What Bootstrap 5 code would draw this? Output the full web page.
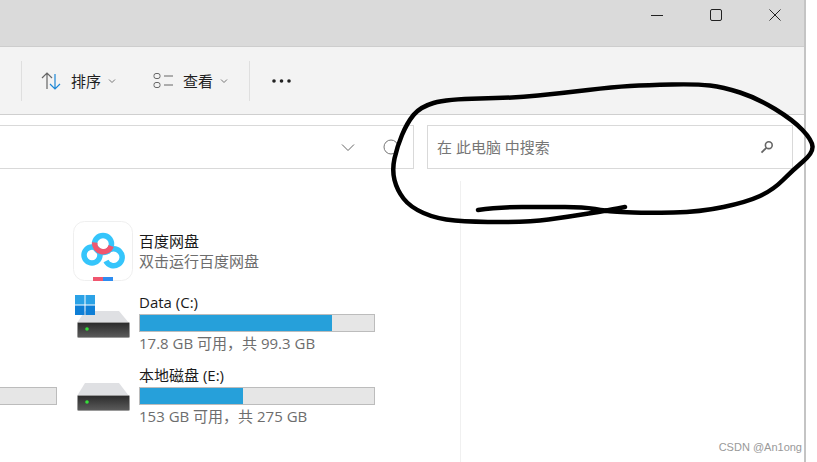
<!DOCTYPE html>
<html lang="zh-CN">
<head>
    <meta charset="UTF-8">
    <meta name="viewport" content="width=device-width, initial-scale=1.0">
    <title>此电脑</title>
    <link href="https://cdn.jsdelivr.net/npm/bootstrap@5.3.0/dist/css/bootstrap.min.css" rel="stylesheet">
    <style>
        html, body { height: 100%; overflow: hidden; background: #fff; }
        body { font-family: "Open Sans", "Noto Sans CJK SC", sans-serif; font-size: 15px; color: #1a1a1a; position: relative; }
        .win { width: 806px; height: 462px; border-right: 2px solid #c4c4c4; overflow: hidden; }
        .title-bar { height: 47px; background: #dadada; border-bottom: 1px solid #cdcdcd; }
        .win-btn { width: 59px; height: 30px; }
        .tool-bar { height: 68px; background: #f3f3f3; border-bottom: 1px solid #cfcfcf; padding-left: 21px; }
        .tool-sep { width: 1px; height: 40px; background: #dfdfdf; }
        .tool-btn { line-height: 20px; color: #1f1f1f; gap: 9px; }
        .tool-btn .chev { margin-left: -2px; }
        .sort-btn { margin-left: 19px; }
        .view-btn { margin-left: 37px; }
        .sep-after { margin-left: 21px; }
        .more-btn { margin-left: 21px; }
        .addr-row { padding-top: 10px; gap: 13px; }
        .addr-box { width: 415px; height: 44px; margin-left: -1px; border: 1px solid #d9d9d9; padding-right: 14px; gap: 28px; }
        .search-box { width: 366px; height: 44px; border: 1px solid #d9d9d9; padding: 0 18px 0 9px; color: #767676; }
        .main-pane { width: 461px; height: 282px; margin-top: 12px; border-right: 1px solid #f0f0f0; padding-top: 40px; }
        .gutter { width: 57px; margin-right: 16px; }
        .item-icon { width: 60px; margin-right: 6px; }
        .drive-bar { height: 18px; margin: 2px 0 1px; background: #e6e6e6; border: 1px solid #bcbcbc; }
        .gutter-bar { margin-top: 22px; border-left: 0; }
        .drive-fill { height: 100%; background: #26a0da; }
        .drive-info { width: 236px; line-height: 20px; }
        .app-info { padding-top: 10px; }
        .drive-sub { color: #6d6d6d; }
        .drive-row-c { margin-top: 11px; }
        .drive-row-e { margin-top: 12px; }
        .ink { position: absolute; left: 0; top: 0; pointer-events: none; }
        .mark-csdn { position: absolute; right: 15px; top: 439px; font-family: "Liberation Sans", sans-serif; font-size: 11px; color: #999; line-height: 16px; }
    </style>
</head>
<body>
    <svg width="0" height="0" class="position-absolute">
        <defs>
            <linearGradient id="hddBody" x1="0" y1="0" x2="0" y2="1">
                <stop offset="0" stop-color="#2b2b2b"/>
                <stop offset="1" stop-color="#5c5c5c"/>
            </linearGradient>
        </defs>
    </svg>

    <div class="win">
        <div class="title-bar d-flex justify-content-end">
            <div class="win-btn d-flex align-items-center justify-content-center">
                <svg width="14" height="14" viewBox="0 0 14 14"><path d="M1 7.500h12" stroke="#222" fill="none"/></svg>
            </div>
            <div class="win-btn d-flex align-items-center justify-content-center">
                <svg width="14" height="14" viewBox="0 0 14 14"><rect x="1.500" y="1.500" width="11" height="11" rx="1.500" stroke="#222" fill="none"/></svg>
            </div>
            <div class="win-btn d-flex align-items-center justify-content-center">
                <svg width="14" height="14" viewBox="0 0 14 14"><path d="M1.500 1.500l11 11M12.500 1.500l-11 11" stroke="#222" fill="none"/></svg>
            </div>
        </div>

        <div class="tool-bar d-flex align-items-center">
            <div class="tool-sep"></div>
            <div class="tool-btn sort-btn d-flex align-items-center">
                <svg width="21" height="20" viewBox="0 0 21 20"><path d="M6 18V2M1 7l5-5 5 5" stroke="#666" stroke-width="1.200" fill="none"/><path d="M14 3v15M9 13l5 5 5-5" stroke="#1b87d6" stroke-width="1.200" fill="none"/></svg>
                <span>排序</span>
                <svg class="chev" width="8" height="6" viewBox="0 0 8 6"><path d="M1 1.500l3 3 3-3" stroke="#777" fill="none"/></svg>
            </div>
            <div class="tool-btn view-btn d-flex align-items-center">
                <svg width="21" height="18" viewBox="0 0 21 18"><rect x="1" y="1.500" width="6" height="5" rx="2" stroke="#666" fill="none"/><rect x="1" y="10.500" width="6" height="5" rx="2" stroke="#666" fill="none"/><path d="M11 4h9M11 13h9" stroke="#666" fill="none"/></svg>
                <span>查看</span>
                <svg class="chev" width="8" height="6" viewBox="0 0 8 6"><path d="M1 1.500l3 3 3-3" stroke="#777" fill="none"/></svg>
            </div>
            <div class="tool-sep sep-after"></div>
            <svg class="more-btn" width="21" height="6" viewBox="0 0 21 6"><circle cx="3" cy="3" r="1.800" fill="#222"/><circle cx="10.500" cy="3" r="1.800" fill="#222"/><circle cx="18" cy="3" r="1.800" fill="#222"/></svg>
        </div>

        <div class="addr-row d-flex">
            <div class="addr-box d-flex align-items-center justify-content-end">
                <svg width="14" height="9" viewBox="0 0 14 9"><path d="M1 1.500l6 6 6-6" stroke="#666" fill="none"/></svg>
                <svg width="16" height="16" viewBox="0 0 16 16"><circle cx="8" cy="8" r="7" stroke="#777" fill="none"/></svg>
            </div>
            <div class="search-box d-flex align-items-center justify-content-between">
                <span>在 此电脑 中搜索</span>
                <svg width="14" height="14" viewBox="0 0 14 14"><circle cx="8.800" cy="5.200" r="3.400" stroke="#666" stroke-width="1.600" fill="none"/><path d="M6.300 7.800L1.500 12.600" stroke="#666" stroke-width="1.800" fill="none"/></svg>
            </div>
        </div>

        <div class="main-pane">
            <div class="d-flex align-items-start">
                <div class="gutter"></div>
                <div class="item-icon">
                    <svg width="60" height="60" viewBox="0 0 60 60">
                        <rect x="0.500" y="0.500" width="59" height="59" rx="11" fill="#fff" stroke="#efefef"/>
                        <circle cx="19" cy="34" r="8" stroke="#35c5fb" stroke-width="5.500" fill="none"/>
                        <path d="M34 31A8.500 8.500 0 1 1 33 40" stroke="#35c5fb" stroke-width="5.500" fill="none"/>
                        <circle cx="30" cy="23" r="8.500" stroke="#35c5fb" stroke-width="5.500" fill="none"/>
                        <path d="M21.700 21.500A8.500 8.500 0 0 0 38.200 25" stroke="#f0566f" stroke-width="5.500" fill="none"/>
                        <rect x="20" y="56" width="10" height="4" fill="#f0566f"/>
                        <rect x="30" y="56" width="10" height="4" fill="#2d8cf0"/>
                    </svg>
                </div>
                <div class="drive-info app-info">
                    <div>百度网盘</div>
                    <div class="drive-sub">双击运行百度网盘</div>
                </div>
            </div>

            <div class="d-flex align-items-start drive-row-c">
                <div class="gutter"></div>
                <div class="item-icon">
                    <svg width="60" height="47" viewBox="0 0 60 47">
                        <path d="M12 19h34l10 12H4z" fill="#dfe0e3"/>
                        <rect x="4.500" y="30.500" width="52" height="15" rx="1" fill="url(#hddBody)" stroke="#9a9a9a"/>
                        <circle cx="14" cy="37" r="1.800" fill="#35e03a"/>
                        <path d="M2 3h9.500v9.500H2zM12.500 3H22v9.500h-9.500z" fill="#2ba2e6"/>
                        <path d="M2 13.500h9.500V23H2zM12.500 13.500H22V23h-9.500z" fill="#0f7fd6"/>
                    </svg>
                </div>
                <div class="drive-info">
                    <div>Data (C:)</div>
                    <div class="drive-bar"><div class="drive-fill" style="width: 82%"></div></div>
                    <div class="drive-sub">17.8 GB 可用，共 99.3 GB</div>
                </div>
            </div>

            <div class="d-flex align-items-start drive-row-e">
                <div class="gutter"><div class="drive-bar gutter-bar"></div></div>
                <div class="item-icon">
                    <svg width="60" height="47" viewBox="0 0 60 47">
                        <path d="M12 18h34l10 13H4z" fill="#dfe0e3"/>
                        <rect x="4.500" y="30.500" width="52" height="15" rx="1" fill="url(#hddBody)" stroke="#9a9a9a"/>
                        <circle cx="14" cy="37" r="1.800" fill="#35e03a"/>
                    </svg>
                </div>
                <div class="drive-info">
                    <div>本地磁盘 (E:)</div>
                    <div class="drive-bar"><div class="drive-fill" style="width: 44%"></div></div>
                    <div class="drive-sub">153 GB 可用，共 275 GB</div>
                </div>
            </div>
        </div>
    </div>

    <svg class="ink" width="817" height="462" viewBox="0 0 817 462">
        <path id="inkLine" stroke="#000" stroke-width="4.500" fill="none" stroke-linecap="round" stroke-linejoin="round"/>
    </svg>
    <div class="mark-csdn">CSDN @An1ong</div>

    <script>
        // hand drawn ring round the search box
        const pts = [[478,210],[497,207],[547,207],[583,207],[607,211],[620,212],[647,213],[700,212],[747,202],[773,190],[793,170],[813,153],[812,140],[793,120],[757,98],[723,87],[697,84],[647,85],[613,87],[563,93],[513,98],[447,99],[420,107],[407,123],[397,147],[392,170],[397,190],[410,207],[437,219],[473,222],[530,222],[567,217],[610,210],[625,207]];
        let d = `M${pts[0][0]} ${pts[0][1]}`;
        for (let i = 1; i < pts.length - 1; i++) {
            const mx = (pts[i][0] + pts[i + 1][0]) / 2;
            const my = (pts[i][1] + pts[i + 1][1]) / 2;
            d += ` Q${pts[i][0]} ${pts[i][1]} ${mx} ${my}`;
        }
        d += ` L${pts[pts.length - 1][0]} ${pts[pts.length - 1][1]}`;
        document.getElementById('inkLine').setAttribute('d', d);
    </script>
    <script src="https://cdn.jsdelivr.net/npm/bootstrap@5.3.0/dist/js/bootstrap.bundle.min.js"></script>
</body>
</html>
